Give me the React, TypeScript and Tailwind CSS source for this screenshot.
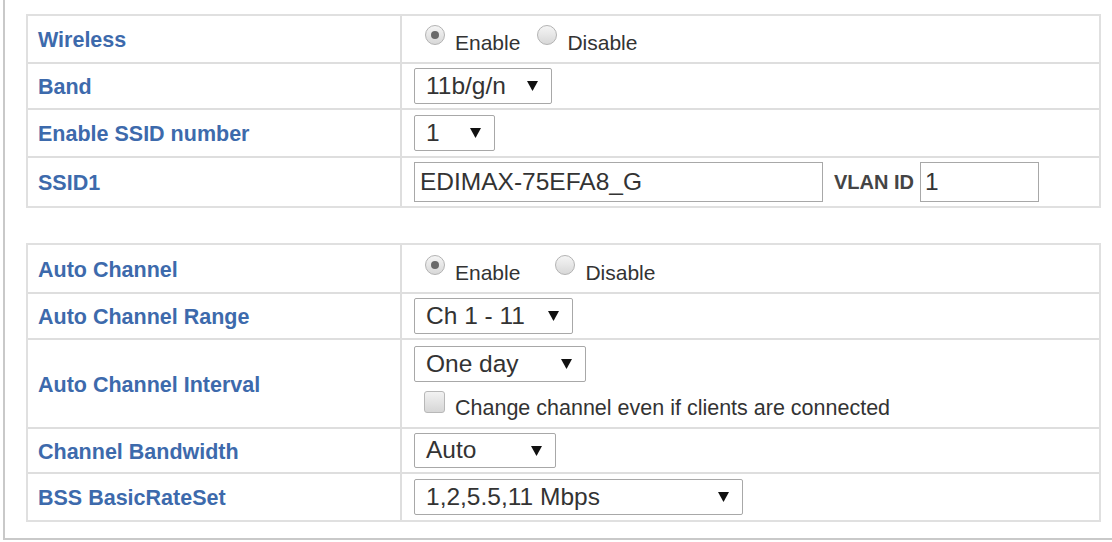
import React from "react";

const Arrow = () => (
  <svg width="11" height="10" viewBox="0 0 11 10" className="shrink-0">
    <polygon points="0,0 11,0 5.5,10" fill="#111" />
  </svg>
);

function Select({ w, text, h = 36 }: { w: number; text: string; h?: number }) {
  return (
    <div
      className="flex items-center justify-between pl-[11px] pr-[13px] border border-[#a8a8a8] rounded-[2px] bg-white text-[24.5px] text-[#333] leading-none"
      style={{ width: w, height: h }}
    >
      <span>{text}</span>
      <Arrow />
    </div>
  );
}

function Radio({ checked }: { checked?: boolean }) {
  return (
    <div className="w-[20px] h-[20px] rounded-full border border-[#b3b3b3] bg-gradient-to-b from-[#f5f5f5] to-[#d8d8d8] flex items-center justify-center -translate-y-[4px] shrink-0">
      {checked && <div className="w-[8px] h-[8px] rounded-full bg-[#6a6a6a]" />}
    </div>
  );
}

function RadioPair({ gap }: { gap: number }) {
  return (
    <div className="flex items-center ml-[11px] text-[21px] text-[#333]">
      <Radio checked />
      <span className="ml-[10px] translate-y-[4px]">Enable</span>
      <div style={{ marginLeft: gap }} className="flex items-center">
        <Radio />
        <span className="ml-[10px] translate-y-[4px]">Disable</span>
      </div>
    </div>
  );
}

function Row({
  label,
  h,
  last,
  children,
}: {
  label: string;
  h: number;
  last?: boolean;
  children: React.ReactNode;
}) {
  return (
    <div
      className={`grid grid-cols-[374px_1fr] ${last ? "" : "border-b-2 border-[#dedede]"}`}
      style={{ height: h }}
    >
      <div className="flex items-center pl-[10px] pt-[3px] border-r-2 border-[#dedede] text-[21.5px] font-bold text-[#3d6aac]">
        {label}
      </div>
      <div className="flex items-center pl-[12px]">{children}</div>
    </div>
  );
}

export default function App() {
  return (
    <div className="w-[1112px] h-[542px] bg-white overflow-hidden font-['Liberation_Sans',Arial,sans-serif]">
      <div className="ml-[3px] w-[1200px] h-[540px] border-l-2 border-b-2 border-[#c9c9c9] pl-[21px] pt-[14px]">
        <div className="w-[1075px] border-2 border-[#e0e0e0]">
          <Row label="Wireless" h={48}>
            <RadioPair gap={17} />
          </Row>
          <Row label="Band" h={46}>
            <Select w={138} text="11b/g/n" />
          </Row>
          <Row label="Enable SSID number" h={48}>
            <Select w={81} text="1" />
          </Row>
          <Row label="SSID1" h={48} last>
            <div className="flex items-center">
              <div className="w-[409px] h-[40px] border border-[#a8a8a8] flex items-center pl-[5px] text-[24.5px] text-[#333]">
                EDIMAX-75EFA8_G
              </div>
              <span className="ml-[11px] text-[20px] font-bold text-[#444] tracking-[0px]">VLAN ID</span>
              <div className="ml-[6px] w-[119px] h-[40px] border border-[#a8a8a8] flex items-center pl-[4px] text-[24.5px] text-[#333]">
                1
              </div>
            </div>
          </Row>
        </div>

        <div className="mt-[35px] w-[1075px] border-2 border-[#e0e0e0]">
          <Row label="Auto Channel" h={49}>
            <RadioPair gap={35} />
          </Row>
          <Row label="Auto Channel Range" h={46}>
            <Select w={159} text="Ch 1 - 11" />
          </Row>
          <Row label="Auto Channel Interval" h={89}>
            <div className="flex flex-col">
              <Select w={172} text="One day" />
              <div className="flex items-center mt-[7px] ml-[10px] text-[21.5px] text-[#333]">
                <div className="w-[21px] h-[22px] rounded-[3px] border border-[#b8b8b8] bg-gradient-to-b from-[#f2f2f2] to-[#d6d6d6] -translate-y-[3px]" />
                <span className="ml-[10px] translate-y-[3px]">Change channel even if clients are connected</span>
              </div>
            </div>
          </Row>
          <Row label="Channel Bandwidth" h={45}>
            <Select w={142} text="Auto" h={35} />
          </Row>
          <Row label="BSS BasicRateSet" h={46} last>
            <Select w={329} text="1,2,5.5,11 Mbps" />
          </Row>
        </div>
      </div>
    </div>
  );
}
